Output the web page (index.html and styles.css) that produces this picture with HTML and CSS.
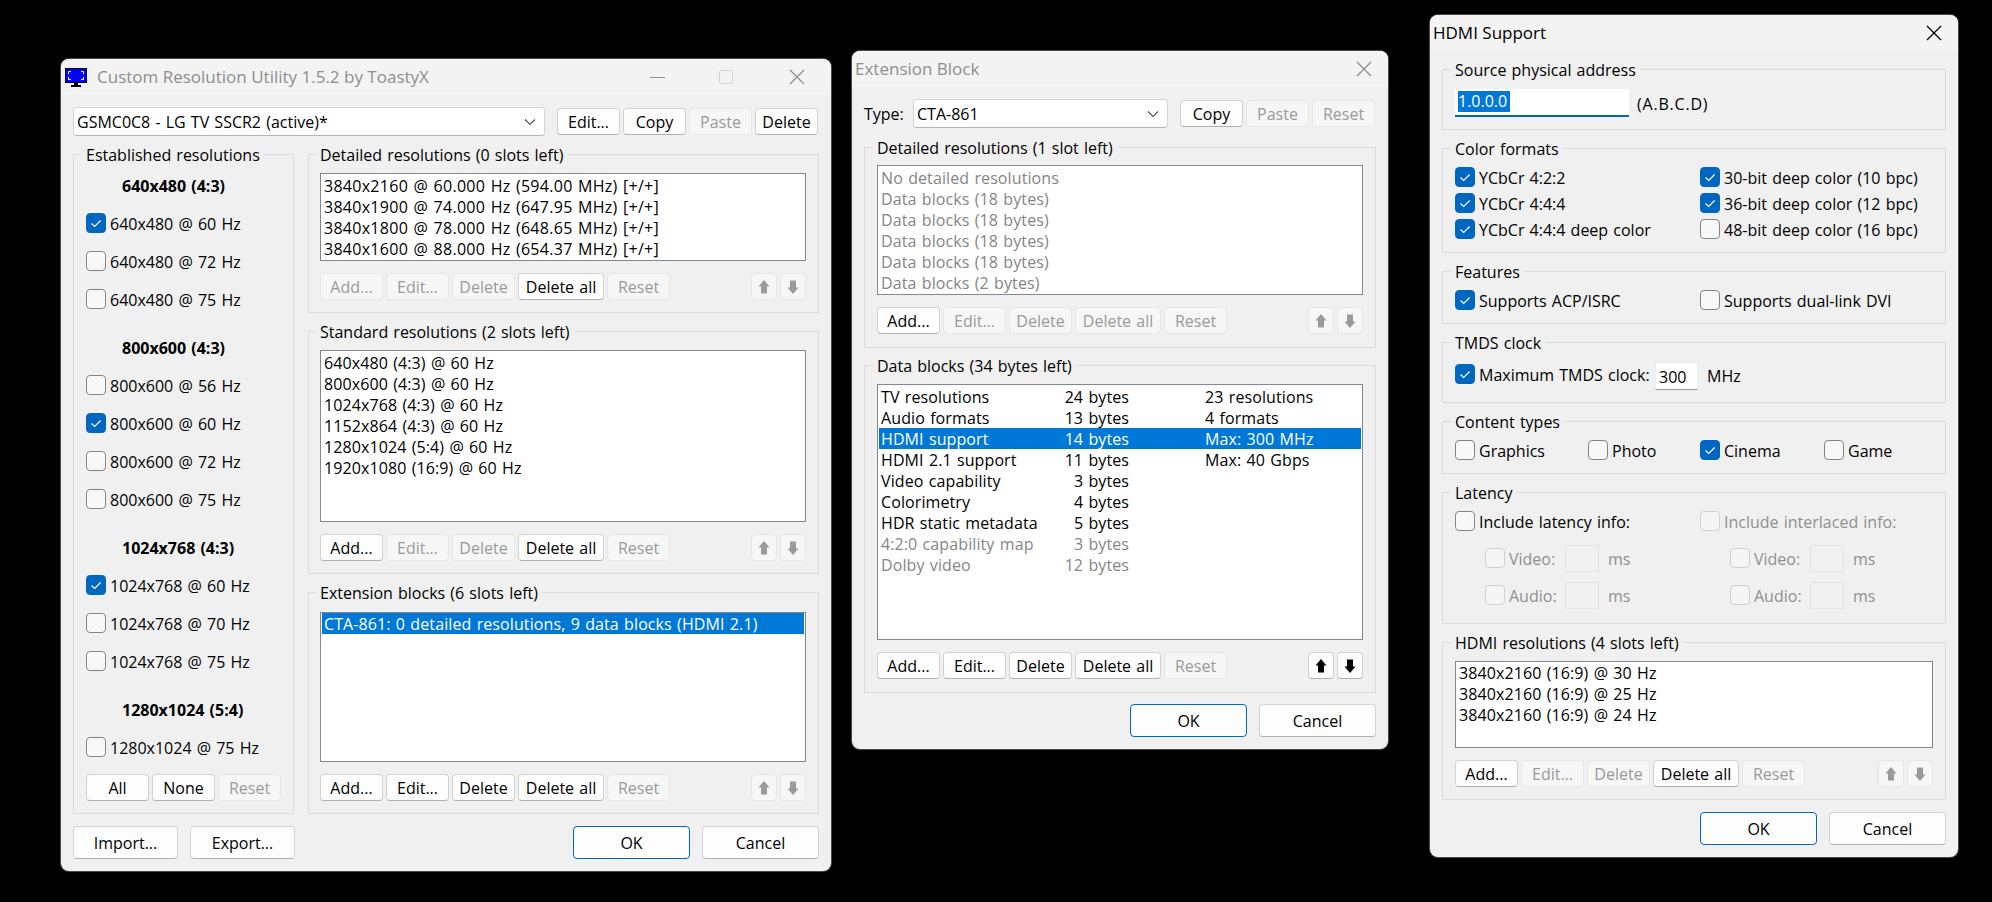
FILE: index.html
```html
<!DOCTYPE html>
<html lang="en">
<head>
<meta charset="utf-8">
<title>Custom Resolution Utility</title>
<link rel="stylesheet" href="styles.css">
</head>
<body>

<svg class="defs" width="0" height="0" aria-hidden="true">
  <symbol id="chev" viewBox="0 0 12 8"><path d="M1 1.5 6 6.5 11 1.5" fill="none" stroke="#555" stroke-width="1.2"/></symbol>
  <symbol id="tick" viewBox="0 0 18 18"><path d="M4.5 9.5 7.7 12.5 13.6 6.5" fill="none" stroke="#fff" stroke-width="1.2"/></symbol>
  <symbol id="close" viewBox="0 0 16 16"><path d="M1 1 15 15M15 1 1 15" fill="none" stroke="currentColor" stroke-width="1.3"/></symbol>
  <symbol id="up" viewBox="0 0 12 14"><path d="M6 0 11.5 6.5H9V13.5H3V6.5H.5Z" fill="currentColor"/></symbol>
  <symbol id="down" viewBox="0 0 12 14"><path d="M3 .5H9V7.5H11.5L6 14 .5 7.5H3Z" fill="currentColor"/></symbol>
</svg>

<main class="desktop">

<!-- Main window -->
<section class="win win-main">
  <header class="titlebar inactive">
    <svg class="appicon" width="22" height="19" viewBox="0 0 22 19"><rect width="22" height="15" fill="#000"/><rect x="1" y="1" width="20" height="13" fill="#0000ff"/><path d="M3.5 6V3.5H6M16 3.5H18.5V6M18.5 9V11.5H16M6 11.5H3.5V9" fill="none" stroke="#fff"/><rect x="9" y="15" width="4" height="2"/><rect x="6" y="17" width="10" height="2"/></svg>
    <span class="title-text">Custom Resolution Utility 1.5.2 by ToastyX</span>
    <span class="cap cap-min"><i class="min-line"></i></span>
    <span class="cap cap-max"><i class="max-box"></i></span>
    <span class="cap cap-close"><svg width="16" height="16"><use href="#close"/></svg></span>
  </header>
  <div class="body body-main">
    <div class="toolbar">
      <div class="combo combo-main"><span>GSMC0C8 - LG TV SSCR2 (active)*</span><svg width="12" height="8"><use href="#chev"/></svg></div>
      <div class="btns btns-top">
        <button class="btn w63">Edit...</button>
        <button class="btn w63">Copy</button>
        <button class="btn w63 off">Paste</button>
        <button class="btn w63">Delete</button>
      </div>
    </div>
    <div class="columns">
      <fieldset class="group group-est">
        <legend>Established resolutions</legend>
        <div class="est-list">
          <div class="est-set">
            <div class="est-head">640x480 (4:3)</div>
            <label class="chk row38"><i class="box on"><svg width="18" height="18"><use href="#tick"/></svg></i>640x480 @ 60 Hz</label>
            <label class="chk row38"><i class="box"></i>640x480 @ 72 Hz</label>
            <label class="chk row38"><i class="box"></i>640x480 @ 75 Hz</label>
          </div>
          <div class="est-set">
            <div class="est-head">800x600 (4:3)</div>
            <label class="chk row38"><i class="box"></i>800x600 @ 56 Hz</label>
            <label class="chk row38"><i class="box on"><svg width="18" height="18"><use href="#tick"/></svg></i>800x600 @ 60 Hz</label>
            <label class="chk row38"><i class="box"></i>800x600 @ 72 Hz</label>
            <label class="chk row38"><i class="box"></i>800x600 @ 75 Hz</label>
          </div>
          <div class="est-set">
            <div class="est-head">1024x768 (4:3)</div>
            <label class="chk row38"><i class="box on"><svg width="18" height="18"><use href="#tick"/></svg></i>1024x768 @ 60 Hz</label>
            <label class="chk row38"><i class="box"></i>1024x768 @ 70 Hz</label>
            <label class="chk row38"><i class="box"></i>1024x768 @ 75 Hz</label>
          </div>
          <div class="est-set">
            <div class="est-head">1280x1024 (5:4)</div>
            <label class="chk row38"><i class="box"></i>1280x1024 @ 75 Hz</label>
          </div>
        </div>
        <div class="btns btns-est">
          <button class="btn w63">All</button>
          <button class="btn w63">None</button>
          <button class="btn w63 off">Reset</button>
        </div>
      </fieldset>
      <div class="stack-right">
        <fieldset class="group g-det">
          <legend>Detailed resolutions (0 slots left)</legend>
          <div class="list h88 spaced">
            <div class="item">3840x2160 @ 60.000 Hz (594.00 MHz) [+/+]</div>
            <div class="item">3840x1900 @ 74.000 Hz (647.95 MHz) [+/+]</div>
            <div class="item">3840x1800 @ 78.000 Hz (648.65 MHz) [+/+]</div>
            <div class="item">3840x1600 @ 88.000 Hz (654.37 MHz) [+/+]</div>
          </div>
          <div class="actions">
            <button class="btn w63 off">Add...</button>
            <button class="btn w63 off">Edit...</button>
            <button class="btn w63 off">Delete</button>
            <button class="btn w86">Delete all</button>
            <button class="btn w63 off">Reset</button>
            <span class="arrows">
              <button class="btn arrow off"><svg width="12" height="14"><use href="#up"/></svg></button>
              <button class="btn arrow off"><svg width="12" height="14"><use href="#down"/></svg></button>
            </span>
          </div>
        </fieldset>
        <fieldset class="group g-std">
          <legend>Standard resolutions (2 slots left)</legend>
          <div class="list h172">
            <div class="item">640x480 (4:3) @ 60 Hz</div>
            <div class="item">800x600 (4:3) @ 60 Hz</div>
            <div class="item">1024x768 (4:3) @ 60 Hz</div>
            <div class="item">1152x864 (4:3) @ 60 Hz</div>
            <div class="item">1280x1024 (5:4) @ 60 Hz</div>
            <div class="item">1920x1080 (16:9) @ 60 Hz</div>
          </div>
          <div class="actions">
            <button class="btn w63">Add...</button>
            <button class="btn w63 off">Edit...</button>
            <button class="btn w63 off">Delete</button>
            <button class="btn w86">Delete all</button>
            <button class="btn w63 off">Reset</button>
            <span class="arrows">
              <button class="btn arrow off"><svg width="12" height="14"><use href="#up"/></svg></button>
              <button class="btn arrow off"><svg width="12" height="14"><use href="#down"/></svg></button>
            </span>
          </div>
        </fieldset>
        <fieldset class="group g-ext">
          <legend>Extension blocks (6 slots left)</legend>
          <div class="list h150">
            <div class="item sel">CTA-861: 0 detailed resolutions, 9 data blocks (HDMI 2.1)</div>
          </div>
          <div class="actions">
            <button class="btn w63">Add...</button>
            <button class="btn w63">Edit...</button>
            <button class="btn w63">Delete</button>
            <button class="btn w86">Delete all</button>
            <button class="btn w63 off">Reset</button>
            <span class="arrows">
              <button class="btn arrow off"><svg width="12" height="14"><use href="#up"/></svg></button>
              <button class="btn arrow off"><svg width="12" height="14"><use href="#down"/></svg></button>
            </span>
          </div>
        </fieldset>
      </div>
    </div>
    <div class="footer">
      <button class="btn big w105">Import...</button>
      <button class="btn big w105">Export...</button>
      <span class="spacer"></span>
      <button class="btn big w117 default">OK</button>
      <button class="btn big w117">Cancel</button>
    </div>
  </div>
</section>

<!-- Extension Block -->
<section class="win win-ext">
  <header class="titlebar inactive">
    <span class="title-text">Extension Block</span>
    <span class="cap cap-x"><svg width="16" height="16"><use href="#close"/></svg></span>
  </header>
  <div class="body body-ext">
    <div class="toolbar toolbar-ext">
      <span class="type-label">Type:</span>
      <div class="combo combo-ext"><span>CTA-861</span><svg width="12" height="8"><use href="#chev"/></svg></div>
      <div class="btns btns-top">
        <button class="btn w63">Copy</button>
        <button class="btn w63 off">Paste</button>
        <button class="btn w63 off">Reset</button>
      </div>
    </div>
    <fieldset class="group g-ext-det">
      <legend>Detailed resolutions (1 slot left)</legend>
      <div class="list h130 muted">
        <div class="item">No detailed resolutions</div>
        <div class="item">Data blocks (18 bytes)</div>
        <div class="item">Data blocks (18 bytes)</div>
        <div class="item">Data blocks (18 bytes)</div>
        <div class="item">Data blocks (18 bytes)</div>
        <div class="item">Data blocks (2 bytes)</div>
      </div>
      <div class="actions">
        <button class="btn w63">Add...</button>
        <button class="btn w63 off">Edit...</button>
        <button class="btn w63 off">Delete</button>
        <button class="btn w86 off">Delete all</button>
        <button class="btn w63 off">Reset</button>
        <span class="arrows">
          <button class="btn arrow off"><svg width="12" height="14"><use href="#up"/></svg></button>
          <button class="btn arrow off"><svg width="12" height="14"><use href="#down"/></svg></button>
        </span>
      </div>
    </fieldset>
    <fieldset class="group g-ext-data">
      <legend>Data blocks (34 bytes left)</legend>
      <div class="list h256">
        <div class="item cols"><span>TV resolutions</span><span class="num">24 bytes</span><span class="info">23 resolutions</span></div>
        <div class="item cols"><span>Audio formats</span><span class="num">13 bytes</span><span class="info">4 formats</span></div>
        <div class="item cols sel"><span>HDMI support</span><span class="num">14 bytes</span><span class="info">Max: 300 MHz</span></div>
        <div class="item cols"><span>HDMI 2.1 support</span><span class="num">11 bytes</span><span class="info">Max: 40 Gbps</span></div>
        <div class="item cols"><span>Video capability</span><span class="num">3 bytes</span><span class="info"></span></div>
        <div class="item cols"><span>Colorimetry</span><span class="num">4 bytes</span><span class="info"></span></div>
        <div class="item cols"><span>HDR static metadata</span><span class="num">5 bytes</span><span class="info"></span></div>
        <div class="item cols dim"><span>4:2:0 capability map</span><span class="num">3 bytes</span><span class="info"></span></div>
        <div class="item cols dim"><span>Dolby video</span><span class="num">12 bytes</span><span class="info"></span></div>
      </div>
      <div class="actions">
        <button class="btn w63">Add...</button>
        <button class="btn w63">Edit...</button>
        <button class="btn w63">Delete</button>
        <button class="btn w86">Delete all</button>
        <button class="btn w63 off">Reset</button>
        <span class="arrows">
          <button class="btn arrow"><svg width="12" height="14"><use href="#up"/></svg></button>
          <button class="btn arrow"><svg width="12" height="14"><use href="#down"/></svg></button>
        </span>
      </div>
    </fieldset>
    <div class="footer">
      <span class="spacer"></span>
      <button class="btn big w117 default">OK</button>
      <button class="btn big w117">Cancel</button>
    </div>
  </div>
</section>

<!-- HDMI Support -->
<section class="win win-hdmi">
  <header class="titlebar">
    <span class="title-text">HDMI Support</span>
    <span class="cap cap-x"><svg width="16" height="16"><use href="#close"/></svg></span>
  </header>
  <div class="body body-hdmi">
    <fieldset class="group g-src">
      <legend>Source physical address</legend>
      <div class="src-row">
        <div class="field field-src"><span class="selected">1.0.0.0</span></div>
        <span class="abcd">(A.B.C.D)</span>
      </div>
    </fieldset>
    <fieldset class="group g-color">
      <legend>Color formats</legend>
      <div class="two-col">
        <label class="chk"><i class="box on"><svg width="18" height="18"><use href="#tick"/></svg></i>YCbCr 4:2:2</label>
        <label class="chk"><i class="box on"><svg width="18" height="18"><use href="#tick"/></svg></i>30-bit deep color (10 bpc)</label>
        <label class="chk"><i class="box on"><svg width="18" height="18"><use href="#tick"/></svg></i>YCbCr 4:4:4</label>
        <label class="chk"><i class="box on"><svg width="18" height="18"><use href="#tick"/></svg></i>36-bit deep color (12 bpc)</label>
        <label class="chk"><i class="box on"><svg width="18" height="18"><use href="#tick"/></svg></i>YCbCr 4:4:4 deep color</label>
        <label class="chk"><i class="box"></i>48-bit deep color (16 bpc)</label>
      </div>
    </fieldset>
    <fieldset class="group g-feat">
      <legend>Features</legend>
      <div class="two-col">
        <label class="chk"><i class="box on"><svg width="18" height="18"><use href="#tick"/></svg></i>Supports ACP/ISRC</label>
        <label class="chk"><i class="box"></i>Supports dual-link DVI</label>
      </div>
    </fieldset>
    <fieldset class="group g-tmds">
      <legend>TMDS clock</legend>
      <div class="tmds-row">
        <label class="chk"><i class="box on"><svg width="18" height="18"><use href="#tick"/></svg></i>Maximum TMDS clock:</label>
        <div class="field field-tmds">300</div>
        <span class="unit">MHz</span>
      </div>
    </fieldset>
    <fieldset class="group g-content">
      <legend>Content types</legend>
      <div class="four-col">
        <label class="chk"><i class="box"></i>Graphics</label>
        <label class="chk"><i class="box"></i>Photo</label>
        <label class="chk"><i class="box on"><svg width="18" height="18"><use href="#tick"/></svg></i>Cinema</label>
        <label class="chk"><i class="box"></i>Game</label>
      </div>
    </fieldset>
    <fieldset class="group g-lat">
      <legend>Latency</legend>
      <div class="two-col lat-top">
        <label class="chk"><i class="box"></i>Include latency info:</label>
        <label class="chk dis"><i class="box"></i>Include interlaced info:</label>
      </div>
      <div class="two-col lat-sub">
        <div class="lat-row"><label class="chk dis"><i class="box"></i>Video:</label><div class="field field-off"></div><span class="unit dis">ms</span></div>
        <div class="lat-row"><label class="chk dis"><i class="box"></i>Video:</label><div class="field field-off"></div><span class="unit dis">ms</span></div>
        <div class="lat-row"><label class="chk dis"><i class="box"></i>Audio:</label><div class="field field-off"></div><span class="unit dis">ms</span></div>
        <div class="lat-row"><label class="chk dis"><i class="box"></i>Audio:</label><div class="field field-off"></div><span class="unit dis">ms</span></div>
      </div>
    </fieldset>
    <fieldset class="group g-res">
      <legend>HDMI resolutions (4 slots left)</legend>
      <div class="list h87">
        <div class="item">3840x2160 (16:9) @ 30 Hz</div>
        <div class="item">3840x2160 (16:9) @ 25 Hz</div>
        <div class="item">3840x2160 (16:9) @ 24 Hz</div>
      </div>
      <div class="actions">
        <button class="btn w63">Add...</button>
        <button class="btn w63 off">Edit...</button>
        <button class="btn w63 off">Delete</button>
        <button class="btn w86">Delete all</button>
        <button class="btn w63 off">Reset</button>
        <span class="arrows">
          <button class="btn arrow off"><svg width="12" height="14"><use href="#up"/></svg></button>
          <button class="btn arrow off"><svg width="12" height="14"><use href="#down"/></svg></button>
        </span>
      </div>
    </fieldset>
    <div class="footer">
      <span class="spacer"></span>
      <button class="btn big w117 default">OK</button>
      <button class="btn big w117">Cancel</button>
    </div>
  </div>
</section>

</main>
</body>
</html>
```
FILE: styles.css
```css
* { box-sizing: border-box; }
html, body { margin: 0; height: 100%; background: #000; }
body {
  font-family: "Open Sans", "Noto Sans", "Liberation Sans", sans-serif;
  font-size: 16px;
  line-height: 21px;
  word-spacing: 1px;
  color: #000;
  overflow: hidden;
}
.defs { position: absolute; }
.desktop { position: relative; width: 1992px; height: 902px; }

/* Windows sit on a free desktop canvas */
.win {
  position: absolute;
  display: flex;
  flex-direction: column;
  background: #f0f0f0;
  border-radius: 8px;
  box-shadow: 0 0 0 1px #4a4a4a;
  overflow: hidden;
}
.win-main { left: 61px; top: 59px; width: 770px; height: 812px; }
.win-ext  { left: 852px; top: 51px; width: 536px; height: 698px; }
.win-hdmi { left: 1430px; top: 15px; width: 528px; height: 842px; }

.titlebar {
  display: flex;
  align-items: center;
  height: 36px;
  flex: none;
  background: #f3f3f3;
  padding-left: 3px;
  color: #000;
}
.titlebar.inactive { color: #8e8e8e; }
.title-text { flex: 1; font-size: 17px; word-spacing: 0; padding-bottom: 2px; }
.appicon { margin: 0 10px 0 1px; flex: none; }
.cap { display: flex; align-items: center; justify-content: center; height: 36px; flex: none; }
.cap-min { width: 66px; }
.cap-max { width: 72px; }
.cap-close { width: 69px; }
.cap-x { width: 49px; }
.min-line { display: block; width: 15px; height: 1px; background: #8e8e8e; }
.max-box { display: block; width: 14px; height: 14px; border: 1px solid #d4d4d4; border-radius: 2px; }

.body { flex: 1; display: flex; flex-direction: column; }
.body-main { padding: 12px 12px 0 12px; }
.body-ext { padding: 12px 12px 0 12px; }
.body-hdmi { padding: 8px 12px 0 12px; gap: 8px; }

.toolbar { display: flex; align-items: center; height: 29px; flex: none; }
.toolbar-ext { margin-bottom: 9px; }
.type-label { width: 49px; flex: none; padding-top: 2px; }

.combo {
  display: flex;
  align-items: center;
  justify-content: space-between;
  height: 29px;
  background: #fff;
  border: 1px solid #d4d4d4;
  border-bottom-color: #b4b4b4;
  border-radius: 4px;
  padding: 0 8px 0 3px;
  flex: none;
}
.combo span { padding-top: 2px; }
.combo-main { width: 472px; margin-right: 12px; }
.combo-ext { width: 255px; margin-right: 12px; }

.btn {
  display: inline-flex;
  align-items: center;
  justify-content: center;
  height: 27px;
  padding: 2px 0 0;
  font: inherit;
  word-spacing: inherit;
  color: #000;
  background: #fdfdfd;
  border: 1px solid #d2d2d2;
  border-bottom-color: #b0b0b0;
  border-radius: 4px;
  flex: none;
}
.btn.off {
  color: #9a9a9a;
  background: #f6f6f6;
  border-color: #e6e6e6;
}
.btn.big { height: 33px; }
.btn.default { border-color: #0067c0; }
.w63 { width: 63px; }
.w86 { width: 86px; }
.w105 { width: 105px; }
.w117 { width: 117px; }

.btns { display: flex; gap: 3px; }
.btns-est { margin-top: 8px; }

.columns { display: flex; gap: 14px; margin-top: 8px; flex: none; }
.stack-right { display: flex; flex-direction: column; gap: 8px; width: 511px; }

.group {
  margin: 0;
  min-width: 0;
  border: 1px solid #dcdcdc;
  padding: 8px 12px 0 11px;
}
.group legend {
  padding: 0 4px;
  margin-left: -4px;
  height: 21px;
  line-height: 23px;
}
.group-est { width: 221px; height: 670px; padding: 1px 12px 0 12px; }
.g-det { height: 169px; }
.g-std { height: 253px; }
.g-ext { height: 232px; padding-top: 9px; }
.g-ext .list { padding-top: 0; }
.g-ext-det { height: 211px; padding: 7px 12px 0; }
.g-ext-data { height: 338px; margin-top: 7px; padding-left: 12px; }

.est-list { display: flex; flex-direction: column; gap: 10px; }
.est-head {
  height: 38px;
  display: flex;
  align-items: center;
  padding: 2px 0 0 36px;
  font-weight: 700;
}

.chk { display: flex; align-items: center; gap: 4px; height: 26px; padding-top: 2px; white-space: nowrap; }
.row38 { height: 38px; }
.chk.dis, .unit.dis { color: #8f8f8f; }

.box {
  display: block;
  flex: none;
  width: 20px;
  height: 20px;
  margin-top: -2px;
  background: #f8f8f8;
  border: 1px solid #858585;
  border-radius: 4px;
}
.box svg { display: block; }
.box.on { border-color: #0067c0; background: #0067c0; }
.chk.dis .box { background: #f5f5f5; border-color: #d0d0d0; }

.list {
  background: #fff;
  border: 1px solid #828790;
  padding: 1px;
  overflow: hidden;
  white-space: nowrap;
}
.h88 { height: 88px; }
.h87 { height: 87px; padding-top: 0; }
.h130 { height: 130px; }
.h150 { height: 150px; }
.h172 { height: 172px; }
.h256 { height: 256px; }
.muted { color: #858585; }
.item { height: 21px; line-height: 23px; padding-left: 2px; letter-spacing: .1px; }
.spaced .item { letter-spacing: .28px; }
.item.sel { background: #0078d7; color: #fff; }
.item.dim { color: #858585; }
.cols { display: grid; grid-template-columns: 190px 58px 1fr; }
.num { text-align: right; white-space: nowrap; justify-self: end; }
.info { padding-left: 76px; }

.actions { display: flex; gap: 3px; margin-top: 12px; align-items: center; }
.arrows { display: flex; gap: 3px; margin-left: auto; }
.arrow { width: 26px; padding: 0; color: #000; }
.arrow.off { color: #9a9a9a; }

.footer { display: flex; gap: 12px; margin-top: 12px; flex: none; }
.spacer { flex: 1; }
.body-ext .footer { margin-top: 11px; }
.body-hdmi .footer { margin-top: 4px; }

/* HDMI dialog */
.field { background: #fff; border: 1px solid #ececec; border-bottom-color: #9a9a9a; height: 28px; line-height: 28px; padding-left: 3px; flex: none; }
.src-row { display: flex; align-items: center; gap: 8px; margin-top: 1px; }
.field-src { width: 174px; border: 0; border-bottom: 2px solid #0067c0; padding: 2px 0 0 3px; line-height: 21px; }
.selected { display: inline-block; background: #0078d7; color: #fff; height: 21px; width: 52px; }
.abcd { letter-spacing: .8px; padding-top: 2px; }
.g-src { height: 71px; }
.g-color { height: 115px; padding-top: 5px; }
.g-feat { height: 63px; padding-top: 5px; }
.g-tmds { height: 71px; padding-top: 7px; }
.g-content { height: 63px; padding-top: 5px; }
.g-lat { height: 142px; padding-top: 5px; }
.g-res { height: 168px; }
.g-src, .g-color, .g-feat, .g-tmds, .g-content, .g-lat, .g-res { padding-right: 12px; padding-left: 12px; }
.g-res .list { width: 478px; }
.two-col { display: grid; grid-template-columns: 245px 1fr; }
.four-col { display: grid; grid-template-columns: 133px 112px 124px 1fr; }
.tmds-row { display: flex; height: 28px; align-items: flex-start; }
.tmds-row .chk { width: 200px; height: 28px; }
.field-tmds { width: 43px; margin-top: 2px; }
.tmds-row .unit { margin: 6px 0 0 9px; }
.lat-sub { row-gap: 9px; margin-top: 10px; }
.lat-row { display: flex; align-items: center; height: 28px; padding-left: 30px; }
.lat-row .chk { width: 80px; height: 28px; }
.field-off { width: 34px; height: 27px; background: #f0f0f0; border: 1px solid #e4e4e4; }
.lat-row .unit { margin-left: 9px; padding-top: 2px; }
```
